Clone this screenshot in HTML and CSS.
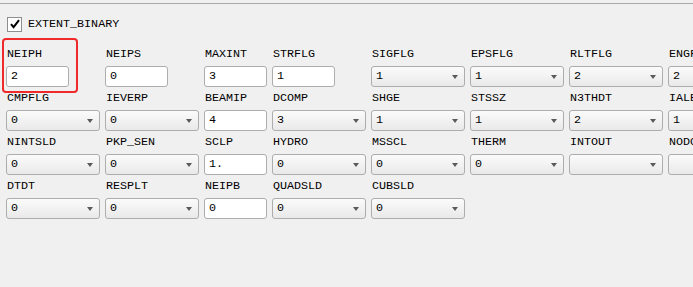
FILE: index.html
```html
<!DOCTYPE html>
<html>
<head>
    <title>EXTENT_BINARY</title>
    <link rel="stylesheet" href="styles.css">
</head>
<body>
    <div class="panel">
        <label class="check-row">
            <span class="checkbox">
                <svg width="12" height="12" viewBox="0 0 12 12"><path d="M2 6.2 L4.6 9.2 L10 2.2" fill="none" stroke="#000" stroke-width="2"/></svg>
            </span>
            <span>EXTENT_BINARY</span>
        </label>

        <div class="fields">
            <div class="field"><div class="label">NEIPH</div><div class="edit">2</div></div>
            <div class="field"><div class="label">NEIPS</div><div class="edit">0</div></div>
            <div class="field"><div class="label">MAXINT</div><div class="edit">3</div></div>
            <div class="field"><div class="label">STRFLG</div><div class="edit">1</div></div>
            <div class="field"><div class="label">SIGFLG</div><div class="combo">1</div></div>
            <div class="field"><div class="label">EPSFLG</div><div class="combo">1</div></div>
            <div class="field"><div class="label">RLTFLG</div><div class="combo">2</div></div>
            <div class="field"><div class="label">ENGFLG</div><div class="combo">2</div></div>

            <div class="field"><div class="label">CMPFLG</div><div class="combo">0</div></div>
            <div class="field"><div class="label">IEVERP</div><div class="combo">0</div></div>
            <div class="field"><div class="label">BEAMIP</div><div class="edit">4</div></div>
            <div class="field"><div class="label">DCOMP</div><div class="combo">3</div></div>
            <div class="field"><div class="label">SHGE</div><div class="combo">1</div></div>
            <div class="field"><div class="label">STSSZ</div><div class="combo">1</div></div>
            <div class="field"><div class="label">N3THDT</div><div class="combo">2</div></div>
            <div class="field"><div class="label">IALEMAT</div><div class="combo">1</div></div>

            <div class="field"><div class="label">NINTSLD</div><div class="combo">0</div></div>
            <div class="field"><div class="label">PKP_SEN</div><div class="combo">0</div></div>
            <div class="field"><div class="label">SCLP</div><div class="edit">1.</div></div>
            <div class="field"><div class="label">HYDRO</div><div class="combo">0</div></div>
            <div class="field"><div class="label">MSSCL</div><div class="combo">0</div></div>
            <div class="field"><div class="label">THERM</div><div class="combo">0</div></div>
            <div class="field"><div class="label">INTOUT</div><div class="combo"></div></div>
            <div class="field"><div class="label">NODOUT</div><div class="combo"></div></div>

            <div class="field"><div class="label">DTDT</div><div class="combo">0</div></div>
            <div class="field"><div class="label">RESPLT</div><div class="combo">0</div></div>
            <div class="field"><div class="label">NEIPB</div><div class="edit">0</div></div>
            <div class="field"><div class="label">QUADSLD</div><div class="combo">0</div></div>
            <div class="field"><div class="label">CUBSLD</div><div class="combo">0</div></div>
        </div>

        <div class="highlight"></div>
    </div>
</body>
</html>
```

FILE: styles.css
```css
html, body {
    margin: 0;
    overflow: hidden;
}
body {
    background-color: #f0f0f0;
    font-family: "Liberation Mono", "DejaVu Sans Mono", monospace;
    font-size: 11.7px;
    color: #000;
}
.panel {
    position: relative;
    margin-top: 3px;
    height: 284px;
    border-top: 1px solid #a9a9a9;
}
.check-row {
    display: flex;
    align-items: center;
    gap: 6px;
    margin: 13px 0 0 7px;
    height: 14px;
}
.checkbox {
    width: 13px;
    height: 13px;
    border: 1px solid #8e8e8e;
    background-color: #fff;
    display: flex;
    align-items: center;
    justify-content: center;
}
.fields {
    display: grid;
    grid-template-columns: 94px 94px 63px 94px 94px 94px 94px 94px;
    column-gap: 5px;
    row-gap: 3px;
    margin: 15px 0 0 6px;
    width: max-content;
}
.label {
    height: 16px;
    line-height: 16px;
    padding-left: 1px;
    margin-bottom: 4px;
    white-space: nowrap;
}
.edit, .combo {
    box-sizing: border-box;
    height: 21px;
    line-height: 19px;
    border: 1px solid #adadad;
    border-radius: 3px;
    padding-left: 4px;
}
.edit {
    width: 63px;
    background-color: #fff;
}
.combo {
    position: relative;
    width: 94px;
    background: linear-gradient(#fbfbfb, #e9e9e9);
}
.combo::after {
    content: "";
    position: absolute;
    right: 6px;
    top: 8px;
    border-left: 3.5px solid transparent;
    border-right: 3.5px solid transparent;
    border-top: 4px solid #5a5a5a;
}
.highlight {
    position: absolute;
    left: 2px;
    top: 34px;
    width: 72px;
    height: 51px;
    border: 2px solid #f02a2a;
    border-radius: 4px;
}
```
